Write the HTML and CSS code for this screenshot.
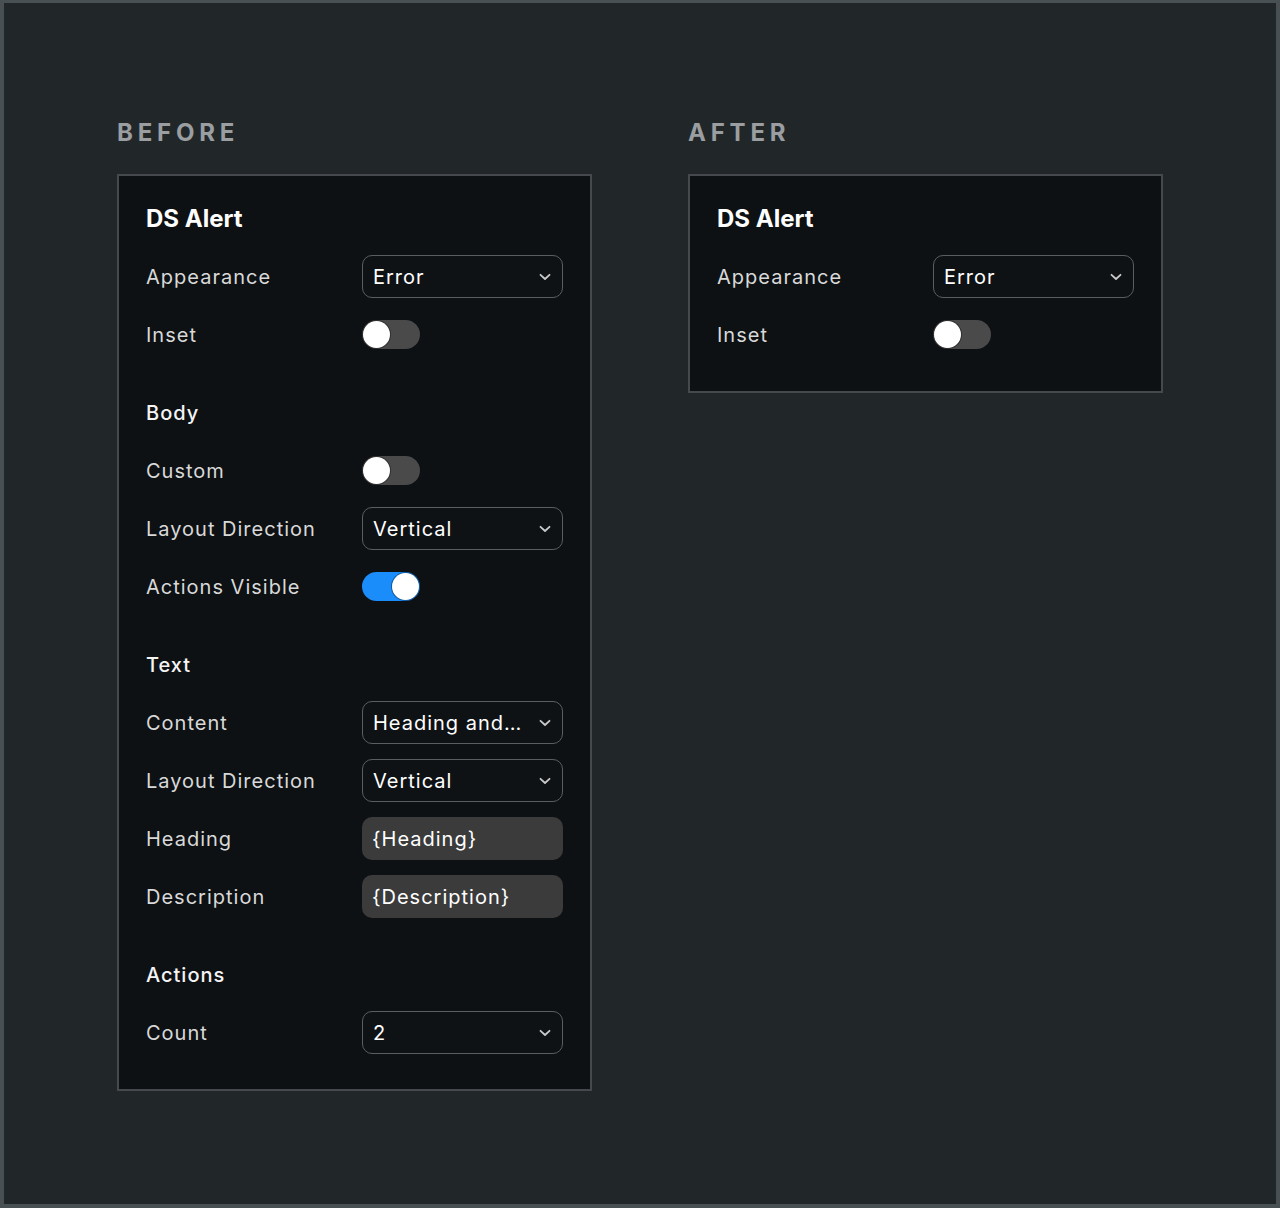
FILE: index.html
```html
<!DOCTYPE html>
<html lang="en">
<head>
<meta charset="utf-8">
<title>DS Alert – Before / After</title>
<link rel="stylesheet" href="styles.css">
</head>
<body>
<div class="frame">
  <section class="column">
    <h2 class="caption">BEFORE</h2>
    <div class="panel">
      <div class="row title">DS Alert</div>
      <div class="row">
        <span class="label">Appearance</span>
        <div class="select"><span class="value">Error</span><svg class="chev" viewBox="0 0 12 8"><path d="M1.5 1.8 L6 6 L10.5 1.8"/></svg></div>
      </div>
      <div class="row">
        <span class="label">Inset</span>
        <div class="toggle"><span class="knob"></span></div>
      </div>

      <div class="row section">Body</div>
      <div class="row">
        <span class="label">Custom</span>
        <div class="toggle"><span class="knob"></span></div>
      </div>
      <div class="row">
        <span class="label">Layout Direction</span>
        <div class="select"><span class="value">Vertical</span><svg class="chev" viewBox="0 0 12 8"><path d="M1.5 1.8 L6 6 L10.5 1.8"/></svg></div>
      </div>
      <div class="row">
        <span class="label">Actions Visible</span>
        <div class="toggle on"><span class="knob"></span></div>
      </div>

      <div class="row section">Text</div>
      <div class="row">
        <span class="label">Content</span>
        <div class="select"><span class="value">Heading and…</span><svg class="chev" viewBox="0 0 12 8"><path d="M1.5 1.8 L6 6 L10.5 1.8"/></svg></div>
      </div>
      <div class="row">
        <span class="label">Layout Direction</span>
        <div class="select"><span class="value">Vertical</span><svg class="chev" viewBox="0 0 12 8"><path d="M1.5 1.8 L6 6 L10.5 1.8"/></svg></div>
      </div>
      <div class="row">
        <span class="label">Heading</span>
        <div class="field">{Heading}</div>
      </div>
      <div class="row">
        <span class="label">Description</span>
        <div class="field">{Description}</div>
      </div>

      <div class="row section">Actions</div>
      <div class="row">
        <span class="label">Count</span>
        <div class="select"><span class="value">2</span><svg class="chev" viewBox="0 0 12 8"><path d="M1.5 1.8 L6 6 L10.5 1.8"/></svg></div>
      </div>
    </div>
  </section>

  <section class="column">
    <h2 class="caption">AFTER</h2>
    <div class="panel">
      <div class="row title">DS Alert</div>
      <div class="row">
        <span class="label">Appearance</span>
        <div class="select"><span class="value">Error</span><svg class="chev" viewBox="0 0 12 8"><path d="M1.5 1.8 L6 6 L10.5 1.8"/></svg></div>
      </div>
      <div class="row">
        <span class="label">Inset</span>
        <div class="toggle"><span class="knob"></span></div>
      </div>
    </div>
  </section>
</div>
</body>
</html>
```
FILE: styles.css
```css
* { box-sizing: border-box; }

html, body {
  margin: 0;
  padding: 0;
}

body {
  font-family: Inter, "Liberation Sans", sans-serif;
  background: #212729;
  color: #dcdcdc;
}

.frame {
  width: 1280px;
  height: 1208px;
  border: 4px solid #485054;
  border-top-width: 3px;
  background: #212729;
  display: flex;
  justify-content: center;
  align-items: flex-start;
  gap: 96px;
  padding-top: 115px;
}

.column {
  width: 475px;
  display: flex;
  flex-direction: column;
}

.caption {
  margin: 0 0 26px 0;
  font-size: 24px;
  line-height: 30px;
  font-weight: 700;
  letter-spacing: 0.2em;
  color: #9a9ea1;
}

.panel {
  background: #0e1114;
  border: 2px solid #45494d;
  padding: 21px 27px 35px 27px;
  display: flex;
  flex-direction: column;
  gap: 15px;
}

.row {
  height: 43px;
  display: grid;
  grid-template-columns: 216px 1fr;
  align-items: center;
}

.title {
  display: flex;
  font-size: 24px;
  font-weight: 700;
  color: #ffffff;
}

.section {
  display: flex;
  margin-top: 20px;
  font-size: 20px;
  font-weight: 500;
  letter-spacing: 1px;
  color: #f4f4f4;
}

.label {
  font-size: 20px;
  letter-spacing: 1px;
  color: #d9d9d9;
}

.select {
  height: 43px;
  border: 1.5px solid #5a5e62;
  border-radius: 10px;
  background: #0f1215;
  display: flex;
  align-items: center;
  justify-content: space-between;
  padding: 0 11px 0 10px;
}

.value {
  font-size: 20px;
  letter-spacing: 1px;
  color: #ffffff;
  white-space: nowrap;
}

.chev {
  width: 12px;
  height: 8px;
  fill: none;
  stroke: #c9c9c9;
  stroke-width: 1.8;
  stroke-linecap: round;
  stroke-linejoin: round;
}

.field {
  height: 43px;
  border-radius: 10px;
  background: #3b3b3c;
  display: flex;
  align-items: center;
  padding: 0 10px;
  font-size: 20px;
  letter-spacing: 1px;
  color: #ffffff;
}

.toggle {
  position: relative;
  width: 58px;
  height: 29px;
  border-radius: 15px;
  background: #4a4a4b;
}

.toggle .knob {
  position: absolute;
  top: 1px;
  left: 1px;
  width: 27px;
  height: 27px;
  border-radius: 50%;
  background: #ffffff;
  box-shadow: 0 0 0 1px rgba(0, 0, 0, 0.35);
}

.toggle.on {
  background: #1a8dfa;
}

.toggle.on .knob {
  left: auto;
  right: 1px;
}
```
